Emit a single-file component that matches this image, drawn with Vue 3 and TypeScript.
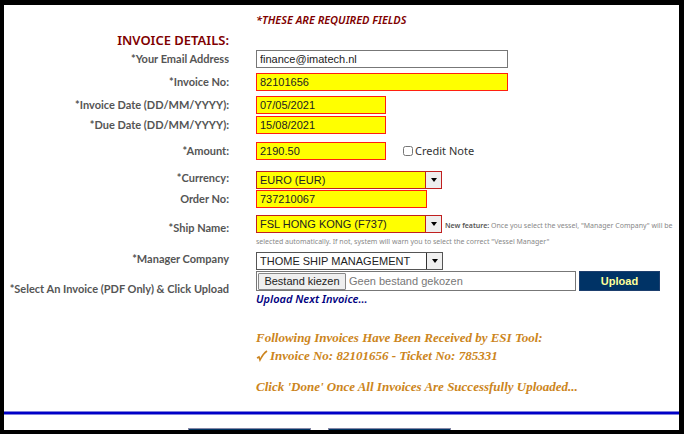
<script setup lang="ts">
import { ref } from 'vue'

const email = ref('finance@imatech.nl')
const invoiceNo = ref('82101656')
const invoiceDate = ref('07/05/2021')
const dueDate = ref('15/08/2021')
const amount = ref('2190.50')
const creditNote = ref(false)
const currency = ref('EURO (EUR)')
const orderNo = ref('737210067')
const ship = ref('FSL HONG KONG (F737)')
const manager = ref('THOME SHIP MANAGEMENT')
const fileName = ref('Geen bestand gekozen')
const picker = ref<HTMLInputElement | null>(null)

function fileChosen(event: Event): void {
  const file = (event.target as HTMLInputElement).files?.[0]
  if (file) fileName.value = file.name
}
</script>

<template>
  <main class="page">
    <form class="form" @submit.prevent>
      <div class="row">
        <p class="required">*THESE ARE REQUIRED FIELDS</p>
      </div>
      <div class="row heading-row">
        <h1 class="heading">INVOICE DETAILS:</h1>
      </div>

      <div class="row">
        <label class="label" for="email">*Your Email Address</label>
        <div class="control"><input id="email" v-model="email" class="field plain long" type="text" /></div>
      </div>
      <div class="row gap-md">
        <label class="label" for="invoice-no">*Invoice No:</label>
        <div class="control"><input id="invoice-no" v-model="invoiceNo" class="field long" type="text" /></div>
      </div>
      <div class="row gap-md">
        <label class="label" for="invoice-date">*Invoice Date (DD/MM/YYYY):</label>
        <div class="control"><input id="invoice-date" v-model="invoiceDate" class="field short" type="text" /></div>
      </div>
      <div class="row gap-sm">
        <label class="label" for="due-date">*Due Date (DD/MM/YYYY):</label>
        <div class="control"><input id="due-date" v-model="dueDate" class="field short" type="text" /></div>
      </div>
      <div class="row gap-lg">
        <label class="label" for="amount">*Amount:</label>
        <div class="control">
          <input id="amount" v-model="amount" class="field short" type="text" />
          <label class="credit"><input v-model="creditNote" class="tick" type="checkbox" />Credit Note</label>
        </div>
      </div>
      <div class="row gap-xl">
        <label class="label raised" for="currency">*Currency:</label>
        <div class="control">
          <span class="drop">
            <select id="currency" v-model="currency" class="field"><option>EURO (EUR)</option></select>
            <svg class="arrow" viewBox="0 0 6 4" aria-hidden="true"><path d="M0 0h6L3 4z" /></svg>
          </span>
        </div>
      </div>
      <div class="row gap-xs">
        <label class="label" for="order-no">Order No:</label>
        <div class="control"><input id="order-no" v-model="orderNo" class="field medium" type="text" /></div>
      </div>
      <div class="row ship-row">
        <label class="label lowered" for="ship">*Ship Name:</label>
        <div class="control hinted">
          <span class="drop">
            <select id="ship" v-model="ship" class="field"><option>FSL HONG KONG (F737)</option></select>
            <svg class="arrow" viewBox="0 0 6 4" aria-hidden="true"><path d="M0 0h6L3 4z" /></svg>
          </span>
          <span class="hint"><b>New feature:</b> Once you select the vessel, "Manager Company" will be selected automatically. If not, system will warn you to select the correct "Vessel Manager"</span>
        </div>
      </div>
      <div class="row gap-md">
        <label class="label raised" for="manager">*Manager Company</label>
        <div class="control">
          <span class="drop dark">
            <select id="manager" v-model="manager" class="field"><option>THOME SHIP MANAGEMENT</option></select>
            <svg class="arrow" viewBox="0 0 6 4" aria-hidden="true"><path d="M0 0h6L3 4z" /></svg>
          </span>
        </div>
      </div>
      <div class="row gap-xs">
        <label class="label" for="invoice-file">*Select An Invoice (PDF Only) &amp; Click Upload</label>
        <div>
          <div class="upload-line">
            <div class="file">
              <input id="invoice-file" ref="picker" type="file" accept=".pdf" hidden @change="fileChosen" />
              <button class="browse" type="button" @click="picker?.click()">Bestand kiezen</button>
              <span>{{ fileName }}</span>
            </div>
            <button class="upload" type="submit">Upload</button>
          </div>
          <a class="next" href="#">Upload Next Invoice...</a>
        </div>
      </div>

      <div class="row received-row">
        <div class="received">
          <p>Following Invoices Have Been Received by ESI Tool:</p>
          <p class="ticket">
            <svg class="check" viewBox="0 0 12 12" aria-hidden="true"><path d="M1 8l2-1 1 3C6 6 8 3 11 1" /></svg>Invoice No: 82101656 - Ticket No: 785331
          </p>
          <p class="done-note">Click 'Done' Once All Invoices Are Successfully Uploaded...</p>
        </div>
      </div>
      <hr class="rule" />
      <div class="actions">
        <button type="button"></button>
        <button type="button"></button>
      </div>
    </form>
  </main>
</template>

<style>
body {
  background: #000;
}
</style>

<style scoped>
* {
  box-sizing: border-box;
}
.page {
  height: 100vh;
  border: solid #000;
  border-width: 5px 5px 4px 4px;
  background: #fff;
  overflow: hidden;
  font-family: "Noto Sans", "Open Sans", sans-serif;
  font-size: 11px;
  color: #555;
}
.form {
  padding-top: 6px;
}
p,
h1 {
  margin: 0;
}
.row {
  display: grid;
  grid-template-columns: 225px minmax(0, 1fr);
  column-gap: 27px;
  align-items: center;
}
.gap-xs { margin-top: 1px; }
.gap-sm { margin-top: 2px; }
.gap-md { margin-top: 5px; }
.gap-lg { margin-top: 8px; }
.gap-xl { margin-top: 11px; }
.ship-row { margin-top: 7px; }
.required {
  grid-column: 2;
  line-height: 18px;
  font-weight: 600;
  font-style: italic;
  color: #800000;
}
.heading-row {
  height: 21px;
}
.heading {
  text-align: right;
  font-size: 13px;
  line-height: 20px;
  font-weight: 600;
  color: #800000;
}
.label {
  text-align: right;
  font-family: Lato, "Noto Sans", sans-serif;
  font-size: 11px;
  line-height: 18px;
  font-weight: 700;
  white-space: nowrap;
}
.label.raised {
  align-self: start;
  line-height: 14px;
}
.label.lowered {
  align-self: start;
  padding-top: 4px;
}
.control {
  display: flex;
  align-items: center;
  min-height: 18px;
}
.field {
  height: 18px;
  margin: 0;
  padding: 0 3px 1px;
  border: 1px solid #ff2010;
  border-radius: 0;
  background: #ff0;
  color: #222;
  font: 11px "Liberation Sans", Arial, sans-serif;
}
.plain {
  border-color: #777;
  background: #fff;
}
.long { width: 252px; }
.medium { width: 171px; }
.short { width: 130px; }
.credit {
  display: flex;
  align-items: center;
  gap: 2px;
  height: 16px;
  margin-left: 17px;
  line-height: 14px;
  color: #333;
}
.tick {
  width: 10px;
  height: 10px;
  margin: 0;
}
.drop {
  display: inline-grid;
  grid-template-columns: 169px 17px;
  align-items: center;
}
.drop .field {
  grid-area: 1 / 1 / 2 / 3;
  width: 100%;
  appearance: none;
  border-color: #c02020;
  background: linear-gradient(to right, #ff0 168px, #c02020 168px, #c02020 169px, #eee 169px);
}
.drop.dark {
  grid-template-columns: 170px 17px;
}
.drop.dark .field {
  border-color: #555;
  background: linear-gradient(to right, #fff 169px, #333 169px, #333 170px, #f0f0f0 170px);
}
.arrow {
  grid-area: 1 / 2;
  justify-self: center;
  width: 6px;
  height: 4px;
  pointer-events: none;
}
.hinted {
  display: block;
  height: 32px;
  padding-right: 4px;
  line-height: 14px;
}
.hint {
  margin-left: 3px;
  font-size: 7px;
  line-height: 14px;
  color: #888;
}
.hint b {
  font-weight: 600;
  color: #555;
}
.upload-line {
  display: flex;
  gap: 3px;
}
.file {
  display: flex;
  align-items: center;
  gap: 3px;
  width: 320px;
  height: 20px;
  padding: 0 1px;
  border: 1px solid #777;
  font: 11px "Liberation Sans", Arial, sans-serif;
  color: #777;
}
.browse {
  width: 88px;
  height: 17px;
  padding: 0;
  border: 1px solid #888;
  border-radius: 1px;
  background: #efefef;
  color: #222;
  font: inherit;
}
.upload {
  width: 81px;
  height: 20px;
  padding: 0;
  border: 1px solid #1d3f6e;
  background: #036;
  color: #ffff99;
  font: bold 11px "Liberation Sans", Arial, sans-serif;
}
.next {
  display: block;
  line-height: 16px;
  font-weight: 600;
  font-style: italic;
  color: #000080;
  text-decoration: none;
}
.received-row {
  margin-top: 22px;
}
.received {
  grid-column: 2;
  font: italic bold 13px/18px "Liberation Serif", "Times New Roman", serif;
  color: #cc8520;
}
.ticket {
  display: flex;
  align-items: center;
  gap: 2px;
}
.check {
  width: 12px;
  height: 12px;
  fill: none;
  stroke: currentColor;
  stroke-width: 1.6;
}
.done-note {
  margin-top: 13px;
}
.rule {
  height: 4px;
  margin: 15px 0 13px;
  border: solid #8080dd;
  border-width: 1px 0;
  background: #0000c8;
}
.actions {
  display: flex;
  gap: 17px;
  padding-left: 184px;
}
.actions button {
  width: 123px;
  height: 20px;
  border: 1px solid #8587a5;
  background: #036;
}
</style>
